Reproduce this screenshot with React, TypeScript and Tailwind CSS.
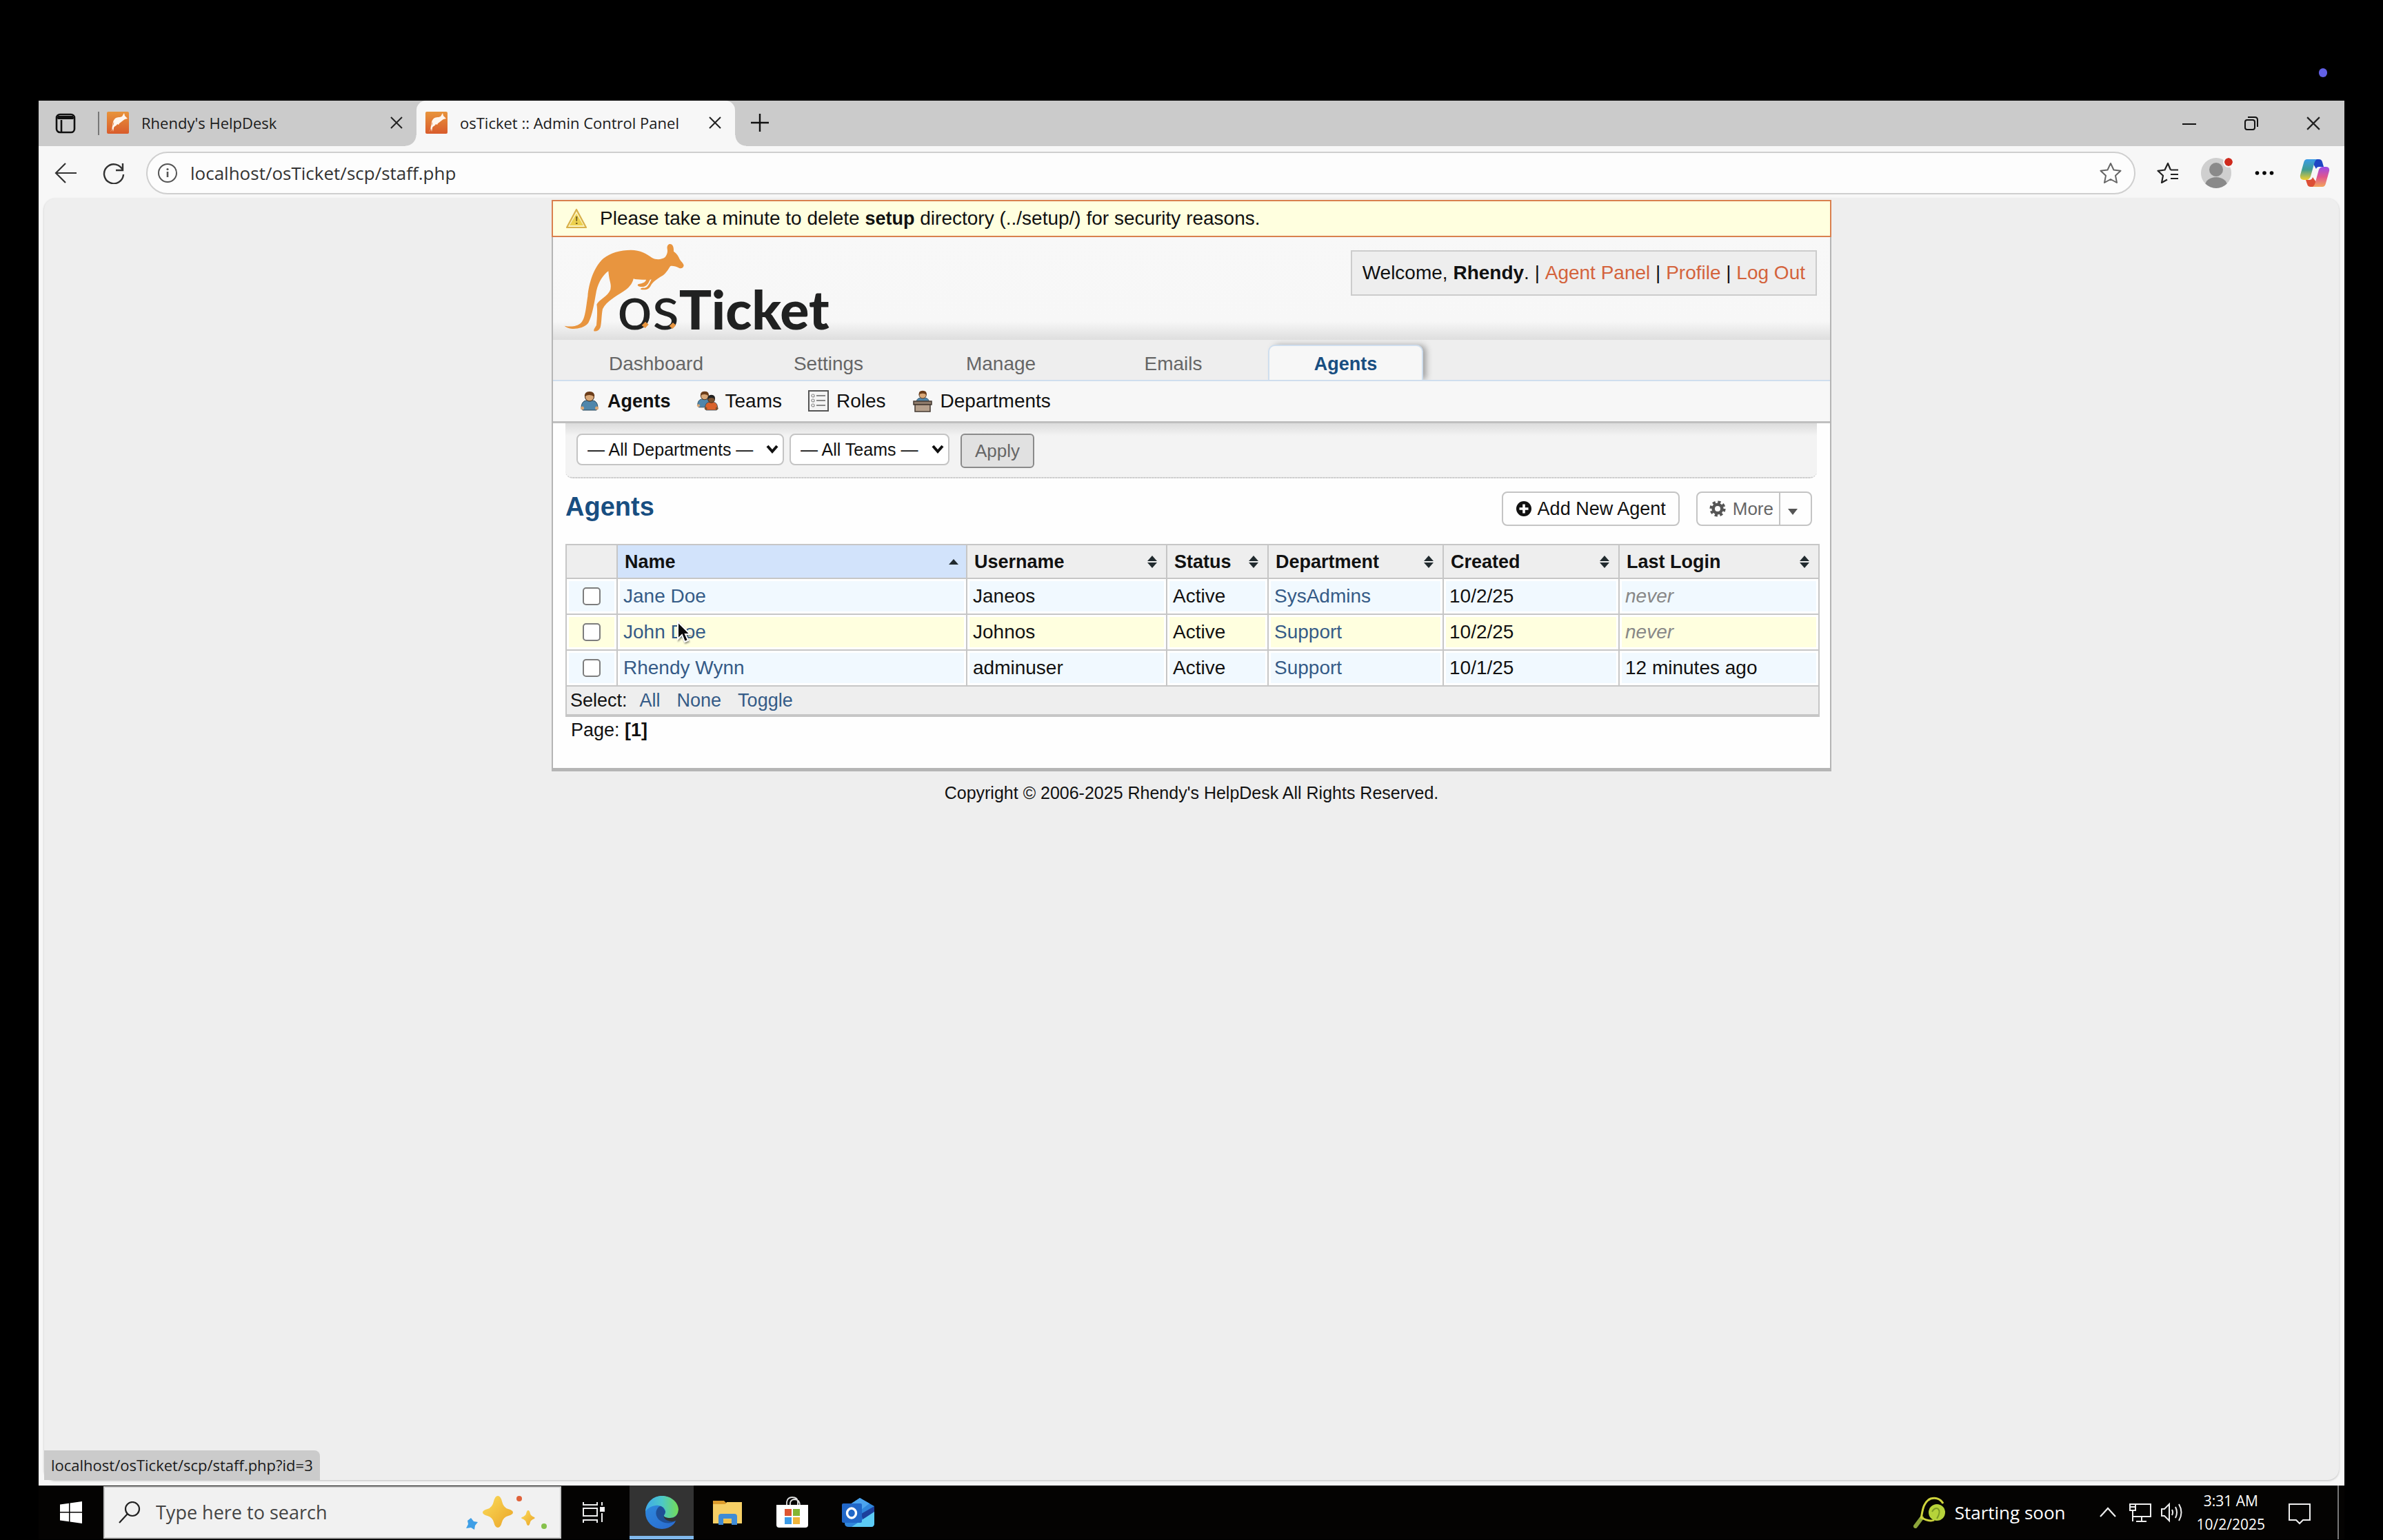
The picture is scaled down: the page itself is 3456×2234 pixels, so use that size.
import React from "react";

const KANGAROO =
  "M56 398C80 402 108 404 128 385C148 365 150 310 157 270C162 210 185 140 225 105C255 80 300 68 345 68C385 68 415 85 437 102C455 112 480 110 493 100C502 88 506 78 503 62C501 50 508 42 515 42C527 42 532 55 531 74C545 83 552 95 557 108C563 118 573 126 575 134C574 145 565 150 556 147C540 138 525 136 517 138C508 150 500 168 482 180C465 190 440 206 432 222C424 238 415 243 388 240C386 235 390 232 402 233C412 234 420 226 430 205L434 196L428 197C420 216 412 226 398 228C386 229 376 226 374 221C376 214 388 216 398 211C406 207 410 203 411 197C388 198 368 197 356 193C352 215 335 235 310 250C280 270 240 290 222 325C216 355 218 385 212 405C206 418 195 424 184 421C182 412 190 405 195 395C198 365 200 325 196 305C205 285 245 270 256 240C262 215 250 205 247 160C225 175 205 205 195 245C185 300 178 350 160 385C145 405 115 412 90 411C75 409 62 404 56 398Z";

function Favicon() {
  return (
    <svg className="h-8 w-8 shrink-0" viewBox="0 0 32 32" aria-hidden="true">
      <defs>
        <linearGradient id="fav" x1="0" y1="0" x2="0" y2="1">
          <stop offset="0" stopColor="#e8943c" />
          <stop offset="1" stopColor="#d95c2c" />
        </linearGradient>
      </defs>
      <rect width="32" height="32" rx="2" fill="url(#fav)" />
      <path d="M5 29C9 27 7 15 11 11C14 7 18 9 22 7L25 2L26 6L30 10L26 11C23 13 21 15 18 17L17 19L15 18C14 21 10 21 10 24L9 29L8 24C8 20 11 18 10 15C8 19 9 27 5 29Z" fill="#fff6ee" />
    </svg>
  );
}

function CloseX({ size = "h-[18px] w-[18px]" }: { size?: string }) {
  return (
    <svg className={size} viewBox="0 0 18 18" fill="none" stroke="#222" strokeWidth="2" aria-hidden="true">
      <path d="M1 1L17 17M17 1L1 17" />
    </svg>
  );
}

function TabStrip() {
  return (
    <div className="flex h-[66px] items-stretch bg-[#cbcbcb] font-['Open_Sans',sans-serif] text-[22px] text-[#1b1b1b]">
      <button className="flex w-[86px] items-center pl-6" aria-label="Tab actions">
        <svg className="h-[30px] w-[30px]" viewBox="0 0 30 30" fill="none" stroke="#111" strokeWidth="2.6">
          <rect x="2" y="2" width="26" height="26" rx="5" />
          <path d="M3 7H27M9 10V28" />
          <path d="M4 4H26V9H4Z" fill="#111" stroke="none" />
        </svg>
      </button>
      <div className="my-4 w-[2px] bg-[#777]" />
      <div className="flex w-[460px] items-center pb-0.5 pl-[11px] pr-5">
        <Favicon />
        <span className="ml-[18px] flex-1">Rhendy's HelpDesk</span>
        <button aria-label="Close Rhendy's HelpDesk"><CloseX /></button>
      </div>
      <div className="relative flex w-[462px] items-center rounded-t-[14px] bg-[#f7f7f7] pb-0.5 pl-[13px] pr-5">
        <span className="absolute bottom-0 right-full h-4 w-4 bg-[radial-gradient(circle_at_0_0,#cbcbcb_15px,#f7f7f7_16px)]" />
        <span className="absolute bottom-0 left-full h-4 w-4 bg-[radial-gradient(circle_at_100%_0,#cbcbcb_15px,#f7f7f7_16px)]" />
        <Favicon />
        <span className="ml-[18px] flex-1 whitespace-nowrap">osTicket :: Admin Control Panel</span>
        <button aria-label="Close osTicket"><CloseX /></button>
      </div>
      <button className="ml-[22px] pb-0.5" aria-label="New tab">
        <svg className="h-7 w-7" viewBox="0 0 28 28" stroke="#111" strokeWidth="2.4"><path d="M14 1V27M1 14H27" /></svg>
      </button>
      <div className="ml-auto flex items-center gap-[70px] pr-[35px]">
        <button aria-label="Minimize">
          <svg className="h-5 w-5" viewBox="0 0 20 20" stroke="#111" strokeWidth="2"><path d="M0 11H20" /></svg>
        </button>
        <button aria-label="Restore">
          <svg className="h-5 w-5" viewBox="0 0 20 20" fill="none" stroke="#111" strokeWidth="2">
            <rect x="1" y="5" width="14" height="14" rx="3" />
            <path d="M5 1H15Q19 1 19 5V15" />
          </svg>
        </button>
        <button aria-label="Close window"><CloseX size="h-5 w-5" /></button>
      </div>
    </div>
  );
}

function Toolbar() {
  return (
    <div className="flex h-[76px] items-center pl-[23px] pr-[21px] pt-0.5">
      <button aria-label="Back">
        <svg className="h-8 w-8" viewBox="0 0 32 32" fill="none" stroke="#333" strokeWidth="2.2"><path d="M16 2L2 16L16 30M2 16H32" /></svg>
      </button>
      <button className="ml-[38px]" aria-label="Refresh">
        <svg className="h-8 w-8" viewBox="0 0 32 32" fill="none" stroke="#333" strokeWidth="2.4">
          <path d="M29 12A14 14 0 1 0 30 18M29 2V12H19" />
        </svg>
      </button>
      <label className="ml-[31px] flex h-[62px] flex-1 items-center rounded-full border-2 border-[#cfcfcf] bg-[#fdfdfd] pl-[15px] pr-[18px]">
        <svg className="h-7 w-7" viewBox="0 0 28 28" fill="none" stroke="#555" strokeWidth="2">
          <circle cx="14" cy="14" r="13" />
          <path d="M14 12V20" strokeWidth="2.6" />
          <circle cx="14" cy="8.500" r="1.600" fill="#555" stroke="none" />
        </svg>
        <input
          aria-label="Address"
          className="ml-[19px] flex-1 bg-transparent font-['Open_Sans',sans-serif] text-[26px] text-[#333] outline-none"
          defaultValue="localhost/osTicket/scp/staff.php"
        />
        <svg className="h-8 w-8" viewBox="0 0 32 32" fill="none" stroke="#666" strokeWidth="2" strokeLinejoin="round">
          <path d="M16 2L20.500 11.500L30.500 12.800L23 19.800L25 30L16 25L7 30L9 19.800L1.500 12.800L11.500 11.500Z" />
        </svg>
      </label>
      <button className="ml-[31px]" aria-label="Favorites">
        <svg className="h-8 w-8" viewBox="0 0 32 32" fill="none" stroke="#222" strokeWidth="2.2" strokeLinejoin="round">
          <path d="M20 11.500L16 2L11.500 11.500L1.500 12.800L9 19.800L7 30L15 25.500M20 11.500H31M20 18H31M20 24H31" />
        </svg>
      </button>
      <button className="relative ml-8" aria-label="Profile">
        <svg className="h-11 w-11" viewBox="0 0 44 44">
          <defs><clipPath id="av"><circle cx="22" cy="22" r="22" /></clipPath></defs>
          <circle cx="22" cy="22" r="22" fill="#cfcfcf" />
          <circle cx="22" cy="17" r="10" fill="#8a8a8a" />
          <ellipse cx="22" cy="40" rx="16" ry="12" fill="#8a8a8a" clipPath="url(#av)" />
        </svg>
        <span className="absolute -right-0.5 top-0 h-3 w-3 rounded-full bg-[#cf2a1d] outline-2 outline-[#f7f7f7]" />
      </button>
      <button className="ml-[34px]" aria-label="More">
        <svg className="h-7 w-7" viewBox="0 0 28 28"><circle cx="3.500" cy="14" r="2.800" /><circle cx="14" cy="14" r="2.800" /><circle cx="24.500" cy="14" r="2.800" /></svg>
      </button>
      <button className="ml-[37px]" aria-label="Copilot">
        <svg className="h-[42px] w-11" viewBox="0 0 44 42">
          <defs>
            <linearGradient id="cpa" x1="0" y1="0" x2="0" y2="1">
              <stop offset="0" stopColor="#3b9be8" /><stop offset="0.500" stopColor="#3f9c92" /><stop offset="1" stopColor="#f2cf2f" />
            </linearGradient>
            <linearGradient id="cpb" x1="0" y1="0" x2="0" y2="1">
              <stop offset="0" stopColor="#9a4be8" /><stop offset="0.500" stopColor="#e0558e" /><stop offset="1" stopColor="#f3a55c" />
            </linearGradient>
          </defs>
          <path d="M20 1H28Q32 1 33 5L35 12H28Q25 12 24 15L20 8Z" fill="#1f46c4" />
          <path d="M11 1H25Q22 3 21 8L16 26Q14 31 10 31H6Q0 31 1 24L6 6Q7 1 11 1Z" fill="url(#cpa)" />
          <path d="M24 41H16Q12 41 11 37L9 31H14Q18 31 19 27L24 34Z" fill="#dd4f36" />
          <path d="M33 41H19Q22 39 23 34L28 16Q30 12 34 12H38Q44 12 43 18L38 36Q37 41 33 41Z" fill="url(#cpb)" />
        </svg>
      </button>
    </div>
  );
}

function Logo() {
  return (
    <svg className="ml-4 mt-2 h-[132px] w-[386px]" viewBox="54 36 1158 396" role="img" aria-label="osTicket">
      <path d={KANGAROO} fill="#e8953f" />
      <g fill="#202121" fontFamily="Lato, sans-serif">
        <text x="285" y="414" fontSize="270">os</text>
        <text x="554" y="415" fontSize="236" fontWeight="900">Ticket</text>
      </g>
      <path d="M392 396L408 380L422 392L407 408Z" fill="#e8953f" />
      <path d="M512 399L528 384L541 395L526 411Z" fill="#e8953f" />
    </svg>
  );
}

function Person({ x = 0, shirt = "#4f86ab", hair = "#6b3d1a", skin = "#d9a878" }: { x?: number; shirt?: string; hair?: string; skin?: string }) {
  return (
    <g transform={`translate(${x} 0)`}>
      <path d="M2 25Q2 15 9 14H19Q26 15 26 25L24 28H4Z" fill={shirt} stroke="#2c4a5c" strokeWidth="1" />
      <circle cx="3.500" cy="25" r="2.500" fill={skin} />
      <circle cx="24.500" cy="25" r="2.500" fill={skin} />
      <circle cx="14" cy="8.500" r="6.500" fill={skin} stroke="#3b2413" strokeWidth="1" />
      <path d="M7 9Q6 1 14 1Q22 1 21 9Q18 6 14 6Q9 6 7 9Z" fill={hair} />
    </g>
  );
}

const subIcons: Record<string, React.ReactNode> = {
  Agents: <g transform="translate(2 1)"><Person /></g>,
  Teams: (
    <g>
      <g transform="translate(0 1) scale(0.850)"><Person /></g>
      <g transform="translate(11 6) scale(0.760 0.820)"><Person shirt="#d9622b" hair="#222" skin="#7a5230" /></g>
    </g>
  ),
  Roles: (
    <g>
      <rect x="2" y="1" width="28" height="29" fill="#f4f4f4" stroke="#555" strokeWidth="2" />
      <g stroke="#888" strokeWidth="2"><path d="M13 8H26M13 15H26M13 22H26" /></g>
      <g fill="#fff" stroke="#888" strokeWidth="1.200"><circle cx="8" cy="8" r="2" /><circle cx="8" cy="15" r="2" /><circle cx="8" cy="22" r="2" /></g>
    </g>
  ),
  Departments: (
    <g>
      <g transform="translate(5 0) scale(0.800)"><Person /></g>
      <path d="M3 16H29V21H3Z" fill="#8d7a6a" stroke="#443a32" strokeWidth="1.500" />
      <path d="M5 21H27V31H5Z" fill="#b5a08c" stroke="#443a32" strokeWidth="1.500" />
    </g>
  ),
};

function Header() {
  return (
    <>
      <div className="flex h-[149px] items-start justify-between bg-[linear-gradient(#f8f8f8_0,#f7f7f7_82%,#dedede_100%)] pr-[19px]">
        <Logo />
        <p className="mt-[19px] flex h-[66px] items-center whitespace-pre border-2 border-[#ccc] bg-[#eee] px-[15px]">
          Welcome, <b>Rhendy</b>. | <a href="#agent" className="text-[#d4633c]">Agent Panel</a> | <a href="#profile" className="text-[#d4633c]">Profile</a> | <a href="#logout" className="text-[#d4633c]">Log Out</a>
        </p>
      </div>
      <nav className="flex h-[60px] gap-[25px] overflow-hidden border-b-2 border-[#cfdeee] bg-[#eee] pl-[37px] pt-[7px] text-[#666]" aria-label="Main">
        {["Dashboard", "Settings", "Manage", "Emails"].map((t) => (
          <a key={t} href={"#" + t} className="flex w-[225px] items-center justify-center pt-1">{t}</a>
        ))}
        <a href="#Agents" className="-mb-0.5 flex w-[225px] items-center justify-center rounded-t-[10px] border-2 border-b-0 border-[#cfdeee] bg-[#f7f7f7] text-[27px] font-bold text-[#184e81] shadow-[6px_-1px_10px_-2px_#999]">
          Agents
        </a>
      </nav>
      <nav className="flex h-[61px] items-center gap-[37px] border-b-[3px] border-[#bfbfbf] bg-[#f7f7f7] pl-[37px]" aria-label="Staff">
        {["Agents", "Teams", "Roles", "Departments"].map((t, i) => (
          <a key={t} href={"#sub" + t} className={i === 0 ? "flex items-center gap-2.5 text-[27px] font-bold" : "flex items-center gap-2.5"}>
            <svg className="h-8 w-8" viewBox="0 0 32 32" aria-hidden="true">{subIcons[t]}</svg>
            {t}
          </a>
        ))}
      </nav>
    </>
  );
}

function Select({ label, text, width }: { label: string; text: string; width: string }) {
  return (
    <div className={"relative " + width}>
      <select aria-label={label} className="h-[46px] w-full appearance-none rounded-lg border-2 border-[#c4c4c4] bg-white pl-3.5 text-[25px]">
        <option>{text}</option>
      </select>
      <svg className="pointer-events-none absolute right-2 top-4 h-[14px] w-[18px]" viewBox="0 0 18 14" fill="none" stroke="#111" strokeWidth="4">
        <path d="M2 2L9 10L16 2" />
      </svg>
    </div>
  );
}

function SortIcon({ active }: { active?: boolean }) {
  return (
    <svg className="h-[18px] w-4" viewBox="0 0 16 18" fill="#222b2f" aria-hidden="true">
      {active ? <path d="M1 13L8 5L15 13Z" /> : <path d="M1 8L8 0L15 8ZM1 10H15L8 18Z" />}
    </svg>
  );
}

const rows = [
  ["Jane Doe", "Janeos", "Active", "SysAdmins", "10/2/25", "never"],
  ["John Doe", "Johnos", "Active", "Support", "10/2/25", "never"],
  ["Rhendy Wynn", "adminuser", "Active", "Support", "10/1/25", "12 minutes ago"],
];

function Cursor() {
  return (
    <svg className="absolute left-[85px] top-2 h-[34px] w-[22px] drop-shadow-[1px_2px_1px_#0006]" viewBox="0 0 22 34" aria-hidden="true">
      <path d="M2 2V27L8 21L12 31L17 29L13 20H20Z" fill="#0b0b0b" stroke="#fff" strokeWidth="2" />
    </svg>
  );
}

function AgentsTable() {
  return (
    <table className="w-full table-fixed border-collapse border-2 border-b-4 border-[#c6c6c6]">
      <colgroup>
        <col className="w-[74px]" /><col className="w-[507px]" /><col className="w-[290px]" /><col className="w-[147px]" />
        <col className="w-[254px]" /><col className="w-[255px]" /><col />
      </colgroup>
      <thead>
        <tr className="h-[49px] bg-[#eee]">
          <th className="border-2 border-[#c6c6c6]" aria-label="Selected" />
          {["Name", "Username", "Status", "Department", "Created", "Last Login"].map((h, i) => (
            <th key={h} className={i === 0 ? "border-2 border-[#c6c6c6] bg-[#d2e3fb] pl-2.5 pr-2.5" : "border-2 border-[#c6c6c6] pl-2.5 pr-3"}>
              <button className="flex h-[45px] w-full items-center justify-between text-[27px] font-bold">
                {h}
                <SortIcon active={i === 0} />
              </button>
            </th>
          ))}
        </tr>
      </thead>
      <tbody>
        {rows.map((r, i) => (
          <tr key={r[0]} className={i === 1 ? "h-[52px] bg-[#ffffdf]" : "h-[52px] bg-[#f1f9ff]"}>
            <td className="border-2 border-[#c6c6c6] shadow-[inset_0_0_0_3px_#fff]">
              <input
                type="checkbox"
                aria-label={"Select " + r[0]}
                className="mx-auto block h-[26px] w-[26px] appearance-none rounded-[5px] border-2 border-[#7d7d7d] bg-white"
              />
            </td>
            {r.map((c, j) => (
              <td key={j} className="relative border-2 border-[#c6c6c6] pl-2 leading-8 shadow-[inset_0_0_0_3px_#fff]">
                {j === 0 || j === 3 ? <a href="#agent" className="text-[#355b87]">{c}</a> : c === "never" ? <i className="text-[#888]">{c}</i> : c}
                {i === 1 && j === 0 && <Cursor />}
              </td>
            ))}
          </tr>
        ))}
      </tbody>
      <tfoot>
        <tr className="h-[43px] bg-[#eee]">
          <td colSpan={7} className="border-2 border-b-4 border-[#c6c6c6] pl-[5px] text-[27px] leading-8">
            <div className="flex">
              Select:
              <a href="#all" className="ml-[18px] text-[#355b87]">All</a>
              <a href="#none" className="ml-6 text-[#355b87]">None</a>
              <a href="#toggle" className="ml-6 text-[#355b87]">Toggle</a>
            </div>
          </td>
        </tr>
      </tfoot>
    </table>
  );
}

function HelpDesk() {
  return (
    <div className="mx-auto mt-[2px] w-full max-w-[1856px] font-['Liberation_Sans',Arial,sans-serif] text-[28px] leading-8 text-[#111]">
      <div className="flex h-[54px] items-center border-2 border-[#d9804f] bg-[#ffffdf] pl-[18px]">
        <svg className="h-[30px] w-8" viewBox="0 0 32 30" aria-hidden="true">
          <path d="M16 2L30 28H2Z" fill="#fbf3c0" stroke="#d8b04a" strokeWidth="2.200" strokeLinejoin="round" />
          <path d="M16 8L26 25H6Z" fill="#ecd04e" />
          <path d="M15 12H17.500L17 19H15.500ZM15 21H17.500V23H15Z" fill="#7a6420" />
        </svg>
        <p className="ml-[18px]">Please take a minute to delete <b className="text-[27px]">setup</b> directory (../setup/) for security reasons.</p>
      </div>
      <div className="border-x-2 border-b-[5px] border-[#b5b5b5] bg-[#fefefe]">
        <Header />
        <div className="pl-[18px] pr-[15px]">
          <form className="mr-1 flex h-20 items-start gap-2 rounded-b-[10px] border-b-2 border-dotted border-[#ccc] bg-[linear-gradient(#dcdcdc,#f3f3f3_18px)] pl-4 pt-[15px]">
            <Select label="Department" text="— All Departments —" width="w-[301px]" />
            <Select label="Team" text="— All Teams —" width="w-[232px]" />
            <button type="button" className="ml-2 h-[50px] w-[107px] rounded-md border-2 border-[#8a8a8a] bg-[#e1e1e1] text-[26px] text-[#666]">Apply</button>
          </form>
          <div className="flex h-[95px] items-start justify-between pr-[11px] pt-[19px]">
            <h1 className="text-[38px] font-bold leading-[44px] text-[#184e81]">Agents</h1>
            <div className="flex gap-6">
              <button className="flex h-[50px] items-center gap-2 rounded-lg border-2 border-[#c4c4c4] bg-[#fefefe] px-[18px] text-[27px]">
                <svg className="h-6 w-6" viewBox="0 0 24 24" aria-hidden="true">
                  <circle cx="12" cy="12" r="11" fill="#111" /><path d="M12 5.500V18.500M5.500 12H18.500" stroke="#fff" strokeWidth="3.600" />
                </svg>
                Add New Agent
              </button>
              <button className="flex h-[50px] items-center rounded-lg border-2 border-[#c4c4c4] bg-[#fefefe] pl-[17px] text-[26px] text-[#666]">
                <svg className="h-6 w-6" viewBox="0 0 24 24" fill="none" aria-hidden="true">
                  <circle cx="12" cy="12" r="9.800" stroke="#555" strokeWidth="3.600" strokeDasharray="4.200 3.500" />
                  <circle cx="12" cy="12" r="6.300" stroke="#555" strokeWidth="4.600" />
                </svg>
                <span className="ml-2.5 pr-2">More</span>
                <span className="flex h-full w-[46px] items-center justify-center border-l-2 border-[#c4c4c4] pr-2 pt-2">
                  <svg className="h-[10px] w-4" viewBox="0 0 16 10" fill="#555" aria-hidden="true"><path d="M1 1H15L8 10Z" /></svg>
                </span>
              </button>
            </div>
          </div>
          <AgentsTable />
          <p className="h-[74px] pl-2 pt-[3px] text-[27px]">Page: <b>[1]</b></p>
        </div>
      </div>
      <p className="pt-[15px] text-center text-[25px]">Copyright © 2006-2025 Rhendy's HelpDesk All Rights Reserved.</p>
    </div>
  );
}

function Taskbar() {
  return (
    <div className="flex h-[78px] items-stretch bg-[#040302] font-['Open_Sans',sans-serif] text-white">
      <button className="flex w-[94px] items-center justify-center" aria-label="Start">
        <svg className="h-8 w-8" viewBox="0 0 32 32" fill="#fff"><path d="M0 4.500L13 2.700V15H0ZM14.500 2.500L32 0V15H14.500ZM0 16.500H13V29.200L0 27.500ZM14.500 16.500H32V32L14.500 29.400Z" /></svg>
      </button>
      <label className="my-px flex w-[664px] items-center border-2 border-[#c8c8c8] bg-[#f1f1f1] pl-5 pr-[18px]">
        <svg className="h-8 w-8" viewBox="0 0 32 32" fill="none" stroke="#222" strokeWidth="2.200"><circle cx="20" cy="11" r="10" /><path d="M13 18L1 31" /></svg>
        <input aria-label="Search" placeholder="Type here to search" className="ml-[22px] min-w-0 flex-1 bg-transparent text-[27px] outline-none placeholder:text-[#444]" />
        <svg className="h-[52px] w-[118px]" viewBox="0 0 118 52" aria-hidden="true">
          <defs><linearGradient id="sp" x1="0" y1="0" x2="1" y2="1"><stop offset="0" stopColor="#fbdc5a" /><stop offset="1" stopColor="#eaa428" /></linearGradient></defs>
          <path d="M46 2Q50 2 52 10Q54 19 61 21Q68 23 68 26Q68 29 61 31Q54 33 52 40Q50 48 46 48Q42 48 40 40Q38 33 31 31Q24 29 24 26Q24 23 31 21Q38 19 40 10Q42 2 46 2Z" fill="url(#sp)" />
          <path d="M90 23Q92 23 93 28Q94 31 99 33Q100 34 99 35Q94 37 93 40Q92 45 90 45Q88 45 87 40Q86 37 81 35Q79 34 81 33Q86 31 87 28Q88 23 90 23Z" fill="url(#sp)" />
          <path d="M7 34L11 39L17 40L13 45L12 51L7 48L0 49L3 43L2 38Z" fill="#3f9fe6" />
          <circle cx="77" cy="6" r="4" fill="#e0623a" /><circle cx="113" cy="46" r="4" fill="#86c14c" />
        </svg>
      </label>
      <button className="flex w-[99px] items-center pl-[31px]" aria-label="Task view">
        <svg className="h-8 w-8" viewBox="0 0 32 32" fill="none" stroke="#eee" strokeWidth="2"><path d="M1 1V5H21V1M1 31V27H21V31M1 10H21V21H1ZM28 1V6M28 17V30" /><rect x="26" y="9" width="5" height="5" fill="#fff" /></svg>
      </button>
      <button className="flex w-[93px] items-center justify-center border-b-[5px] border-[#80b8ec] bg-[#333]" aria-label="Microsoft Edge">
        <svg className="mt-1 h-12 w-12" viewBox="0 0 48 48">
          <defs>
            <linearGradient id="ea" x1="0" y1="0.500" x2="1" y2="0.500"><stop offset="0" stopColor="#3fa9e8" /><stop offset="0.500" stopColor="#4cc8c8" /><stop offset="1" stopColor="#74dd55" /></linearGradient>
            <linearGradient id="eb" x1="0" y1="0" x2="0.600" y2="1"><stop offset="0" stopColor="#2f8fdf" /><stop offset="1" stopColor="#2a6fd2" /></linearGradient>
          </defs>
          <circle cx="24" cy="24" r="24" fill="url(#eb)" />
          <path d="M44 36C36 42 22 40 17 31C13 24 17 15 24 14L30 24C28 26 27 28 28 30C31 36 38 37 44 36Z" fill="#1f4f96" />
          <path d="M0 23C1 10 11 0 24 0C38 0 48 10 48 20C48 28 42 32 36 32C29 32 26 30 27 28C29 26 29 24 29 22C28 17 22 13 15 14C7 15 2 19 0 23Z" fill="url(#ea)" />
          <path d="M44 36C48 33 48 28 48 20C47 29 42 32 36 32C29 32 26 30 27 28C26 30 27 34 33 36C37 38 42 37 44 36Z" fill="#333" />
          <path d="M44 36L50 22V46H40Z" fill="#333" />
        </svg>
      </button>
      <button className="ml-7" aria-label="File Explorer">
        <svg className="h-9 w-[42px]" viewBox="0 0 42 36"><path d="M0 1H16L19 4V8H0Z" fill="#dd9c2c" /><path d="M0 6H18L20 3H42V34H0Z" fill="#f6cf66" /><path d="M8 36V24Q8 20 12 20H31Q35 20 35 24V36H27V27H15V36Z" fill="#3f8bd6" /><path d="M15 34V28H27V34Z" fill="#f0c04a" /></svg>
      </button>
      <button className="ml-[50px]" aria-label="Microsoft Store">
        <svg className="h-[46px] w-[46px]" viewBox="0 0 46 46"><path d="M15 13V8Q16 1 23 1Q31 1 31 8V13M20 13V9Q21 4 27 4Q34 5 34 13" fill="none" stroke="#ddd" strokeWidth="1.800" /><path d="M0 12H46V41Q46 45 42 45H4Q0 45 0 41Z" fill="#fff" /><path d="M12 18H22V28H12Z" fill="#dd5632" /><path d="M24 18H34V28H24Z" fill="#84b533" /><path d="M12 30H22V40H12Z" fill="#3c9be6" /><path d="M24 30H34V40H24Z" fill="#f0b53a" /></svg>
      </button>
      <button className="ml-[49px]" aria-label="Outlook">
        <svg className="h-11 w-12" viewBox="0 0 48 44">
          <path d="M4 16L26 1L47 13V38Q47 43 42 43H10Q4 43 4 38Z" fill="#2f86dc" />
          <path d="M12 10L26 1L40 9L28 18Z" fill="#4ba4ee" /><path d="M28 24L47 13V22L30 32Z" fill="#1c3f9c" />
          <path d="M14 43L47 21V38Q47 43 42 43Z" fill="#5ccbf5" />
          <rect x="0" y="9" width="29" height="28" rx="2" fill="#2167c8" />
          <ellipse cx="14" cy="23" rx="6.500" ry="7" fill="none" stroke="#fff" strokeWidth="3.400" />
        </svg>
      </button>
      <div className="ml-auto flex items-center">
        <svg className="h-[46px] w-12" viewBox="0 0 48 46" fill="none" aria-hidden="true">
          <path d="M3 43L12 31" stroke="#8da53a" strokeWidth="6" strokeLinecap="round" />
          <path d="M11 32C13 24 13 8 25 3C32 1 39 3 43 10M12 31C20 35 26 36 30 34" stroke="#cfd43c" strokeWidth="3" />
          <circle cx="34" cy="23" r="12" fill="#b6d33a" /><path d="M27 22Q31 15 36 18Q40 22 34 32" stroke="#7c9a25" strokeWidth="2" />
        </svg>
        <span className="ml-3 text-[26px]">Starting soon</span>
        <button className="ml-[49px]" aria-label="Show hidden icons"><svg className="h-6 w-6" viewBox="0 0 24 24" fill="none" stroke="#eee" strokeWidth="2.200"><path d="M1 18L12 6L23 18" /></svg></button>
        <svg className="ml-[19px] h-[30px] w-8" viewBox="0 0 32 30" fill="none" stroke="#eee" strokeWidth="2" aria-hidden="true"><path d="M8 3H31V21H6M18 21V27M10 28H25M5 12V28M1 3H9V12H1ZM1 7H9" /></svg>
        <svg className="ml-[14px] h-8 w-8" viewBox="0 0 32 32" fill="none" stroke="#eee" strokeWidth="2" aria-hidden="true"><path d="M1 11H5L12 4V28L5 21H1ZM16 12Q18 16 16 20M21 8Q25 16 21 24M26 4Q33 16 26 28" /></svg>
        <div className="ml-5 text-center text-[21px] leading-[34px]"><div>3:31 AM</div><div>10/2/2025</div></div>
        <button className="ml-[34px]" aria-label="Notifications"><svg className="mt-1 h-8 w-8" viewBox="0 0 32 32" fill="none" stroke="#eee" strokeWidth="2"><path d="M1 2H31V25H21L16 30L11 25H1Z" /></svg></button>
        <div className="ml-[39px] mr-2 h-[78px] w-[2px] bg-[#777]" />
      </div>
    </div>
  );
}

export default function App() {
  return (
    <div className="relative flex h-screen flex-col bg-black px-14 pb-px pt-[146px]">
      <span className="absolute right-[81px] top-[99px] h-[13px] w-3 rounded-full bg-[#6260e6]" />
      <div className="flex min-h-0 flex-1 flex-col bg-[#f7f7f7]">
        <TabStrip />
        <Toolbar />
        <main className="relative mx-2 mb-2 min-h-0 flex-1 rounded-2xl bg-[#eee] shadow-[0_1px_3px_#bbb]">
          <HelpDesk />
          <div className="absolute bottom-0 left-0 flex h-[43px] items-center rounded-tr-lg bg-[#cbcbcb] px-[10px] font-['Open_Sans',sans-serif] text-[22px] text-[#1b1b1b]">
            localhost/osTicket/scp/staff.php?id=3
          </div>
        </main>
      </div>
      <Taskbar />
    </div>
  );
}
